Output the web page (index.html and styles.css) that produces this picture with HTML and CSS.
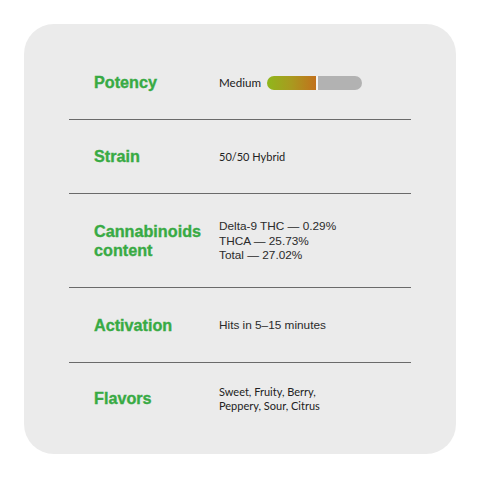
FILE: index.html
```
<!DOCTYPE html>
<html>
<head>
<meta charset="utf-8">
<link rel="stylesheet" href="styles.css">
</head>
<body>
<div class="card">
  <div class="row">
    <div class="label">Potency</div>
    <div class="value potency">
      <span class="myriad medium">Medium</span>
      <span class="bar"><span class="fill"></span><span class="rest"></span></span>
    </div>
  </div>
  <div class="row">
    <div class="label">Strain</div>
    <div class="value myriad">50/50 Hybrid</div>
  </div>
  <div class="row tall">
    <div class="label">Cannabinoids<br>content</div>
    <div class="value helv">Delta-9 THC — 0.29%<br>THCA — 25.73%<br>Total — 27.02%</div>
  </div>
  <div class="row act">
    <div class="label">Activation</div>
    <div class="value helv">Hits in 5–15 minutes</div>
  </div>
  <div class="row last">
    <div class="label">Flavors</div>
    <div class="value myriad">Sweet, Fruity, Berry,<br>Peppery, Sour, Citrus</div>
  </div>
</div>
</body>
</html>
```
FILE: styles.css
```
html, body {
  margin: 0;
  padding: 0;
  background: #ffffff;
}
.card {
  margin: 24px;
  width: 432px;
  height: 430px;
  box-sizing: border-box;
  background: #ebebeb;
  border-radius: 30px;
  padding: 22px 45px 0;
}
.row {
  display: grid;
  grid-template-columns: 125px 1fr;
  align-items: center;
  padding: 27px 0 27px 25px;
  border-bottom: 1px solid #6a6a6a;
}
.row.tall {
  padding: 25px 0 24px 25px;
}
.row.act {
  padding: 28px 0 27px 25px;
}
.row.last {
  border-bottom: none;
  padding-top: 22px;
}
.label {
  font-family: "Liberation Sans", Arial, sans-serif;
  font-weight: bold;
  font-size: 16.2px;
  line-height: 19px;
  color: #38aa44;
  -webkit-text-stroke: 0.35px #38aa44;
}
.value {
  color: #222;
  font-size: 11px;
  line-height: 14px;
}
.helv {
  font-family: "Liberation Sans", Arial, sans-serif;
  font-size: 11.8px;
  line-height: 14.5px;
  color: #2a2a2a;
}
.myriad {
  font-family: Lato, "Open Sans", sans-serif;
  font-size: 11px;
  line-height: 14px;
  color: #222;
}
.myriad.medium {
  font-size: 11.6px;
  color: #1a1a1a;
}
.potency {
  display: flex;
  align-items: center;
  gap: 6px;
}
.bar {
  display: flex;
  width: 95px;
  height: 14px;
  margin-top: 1px;
}
.fill {
  width: 49px;
  border-radius: 7px 0 0 7px;
  background: linear-gradient(90deg, #8fb71c 0%, #a99a1f 50%, #c2711c 100%);
  border-right: 2px solid #f4f4f4;
}
.rest {
  flex: 1;
  border-radius: 0 7px 7px 0;
  background: #b2b2b2;
}
```
